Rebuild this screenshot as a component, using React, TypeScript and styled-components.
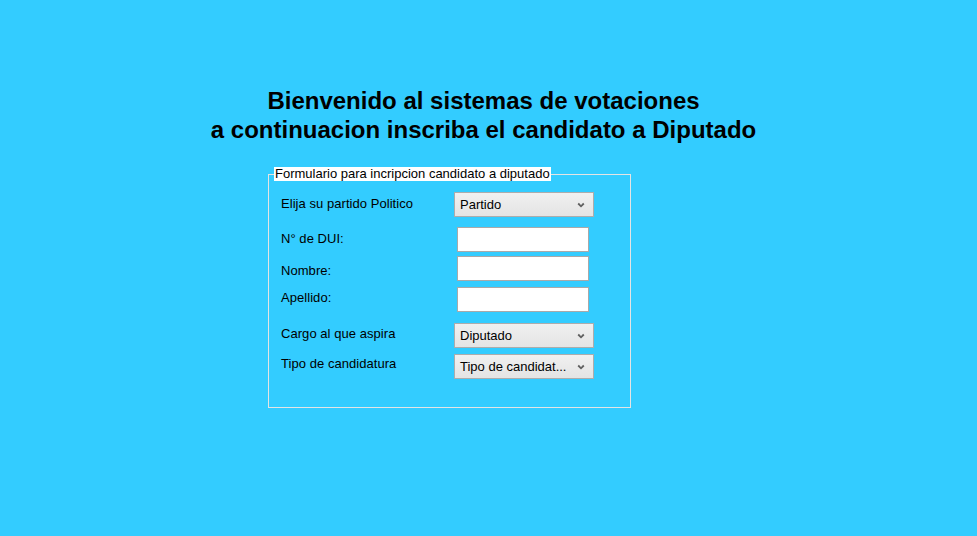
import styled, { createGlobalStyle } from "styled-components";

const GlobalStyle = createGlobalStyle`
  html, body {
    margin: 0;
    padding: 0;
    background: #33ccff;
    font-family: Arial, "Liberation Sans", sans-serif;
    color: #000;
  }
`;

const Page = styled.div`
  min-height: 536px;
  padding-top: 86px;
  box-sizing: border-box;
`;

const Title = styled.h1`
  margin: 0;
  padding-right: 10px;
  text-align: center;
  font-size: 24px;
  line-height: 29px;
  font-weight: bold;
`;

const Form = styled.fieldset`
  margin: 23px 0 0 268px;
  padding: 11px 0 28px 12px;
  width: 363px;
  box-sizing: border-box;
  border: 1px solid #e4e4e4;
  min-width: 0;
`;

const Legend = styled.legend`
  margin-left: -7px;
  padding: 0 1px;
  background: #fff;
  font-size: 13px;
  line-height: 14px;
`;

const Row = styled.div<{ $top: number }>`
  display: grid;
  grid-template-columns: 173px auto;
  align-items: start;
  margin-top: ${(p) => p.$top}px;
`;

const Label = styled.label<{ $pad: number }>`
  font-size: 13px;
  line-height: 15px;
  letter-spacing: 0.05px;
  padding-top: ${(p) => p.$pad}px;
`;

const Select = styled.div`
  display: flex;
  align-items: center;
  justify-content: space-between;
  width: 140px;
  height: 25px;
  box-sizing: border-box;
  padding: 0 8px 0 5px;
  border: 1px solid #acacac;
  background: linear-gradient(#f0f0f0, #e4e4e4);
  font-size: 13px;
  white-space: nowrap;
`;

const Input = styled.input`
  display: block;
  margin-left: 3px;
  width: 132px;
  height: 25px;
  box-sizing: border-box;
  border: 1px solid #a9a9a9;
  background: #fff;
  outline: none;
  font: 13px Arial, "Liberation Sans", sans-serif;
`;

function Chevron() {
  return (
    <svg width="8" height="6" viewBox="0 0 8 6">
      <path d="M1.2 1.5 L4 4.3 L6.8 1.5" fill="none" stroke="#606060" strokeWidth="1.8" />
    </svg>
  );
}

function Dropdown({ value }: { value: string }) {
  return (
    <Select>
      <span>{value}</span>
      <Chevron />
    </Select>
  );
}

const rows = [
  { label: "Elija su partido Politico", type: "select", value: "Partido", top: 0, pad: 4 },
  { label: "N° de DUI:", type: "input", top: 10, pad: 4 },
  { label: "Nombre:", type: "input", top: 4, pad: 7 },
  { label: "Apellido:", type: "input", top: 6, pad: 3 },
  { label: "Cargo al que aspira", type: "select", value: "Diputado", top: 11, pad: 3 },
  { label: "Tipo de candidatura", type: "select", value: "Tipo de candidat...", top: 6, pad: 2 },
];

export default function App() {
  return (
    <>
      <GlobalStyle />
      <Page>
        <Title>
          Bienvenido al sistemas de votaciones
          <br />
          a continuacion inscriba el candidato a Diputado
        </Title>
        <Form>
          <Legend>Formulario para incripcion candidato a diputado</Legend>
          {rows.map((r) => (
            <Row key={r.label} $top={r.top}>
              <Label $pad={r.pad}>{r.label}</Label>
              {r.type === "select" ? <Dropdown value={r.value ?? ""} /> : <Input type="text" />}
            </Row>
          ))}
        </Form>
      </Page>
    </>
  );
}
